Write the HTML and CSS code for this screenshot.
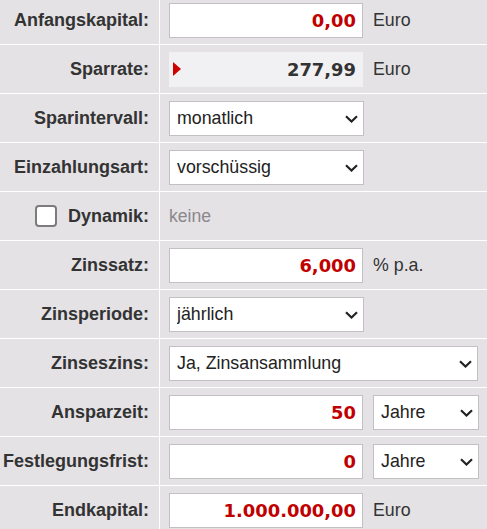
FILE: index.html
```html
<!DOCTYPE html>
<html lang="de">
<head>
<meta charset="utf-8">
<title>Sparrechner</title>
<link rel="stylesheet" href="styles.css">
</head>
<body>
<div class="form">
  <div class="row">
    <div class="label">Anfangskapital:</div>
    <div class="field"><input class="num" type="text" value="0,00"><span class="unit">Euro</span></div>
  </div>
  <div class="row">
    <div class="label">Sparrate:</div>
    <div class="field"><div class="result"><span class="tri"></span><span class="result-val">277,99</span></div><span class="unit">Euro</span></div>
  </div>
  <div class="row">
    <div class="label">Sparintervall:</div>
    <div class="field"><span class="sel-wrap sel-std"><select class="sel"><option>monatlich</option></select><svg class="chev" width="13" height="8" viewBox="0 0 13 8"><path d="M1 1.2 L6.5 6.5 L12 1.2" fill="none" stroke="#222" stroke-width="2.2"/></svg></span></div>
  </div>
  <div class="row">
    <div class="label">Einzahlungsart:</div>
    <div class="field"><span class="sel-wrap sel-std"><select class="sel"><option>vorschüssig</option></select><svg class="chev" width="13" height="8" viewBox="0 0 13 8"><path d="M1 1.2 L6.5 6.5 L12 1.2" fill="none" stroke="#222" stroke-width="2.2"/></svg></span></div>
  </div>
  <div class="row">
    <div class="label"><span class="check"></span>Dynamik:</div>
    <div class="field"><span class="muted">keine</span></div>
  </div>
  <div class="row">
    <div class="label">Zinssatz:</div>
    <div class="field"><input class="num" type="text" value="6,000"><span class="unit">% p.a.</span></div>
  </div>
  <div class="row">
    <div class="label">Zinsperiode:</div>
    <div class="field"><span class="sel-wrap sel-std"><select class="sel"><option>jährlich</option></select><svg class="chev" width="13" height="8" viewBox="0 0 13 8"><path d="M1 1.2 L6.5 6.5 L12 1.2" fill="none" stroke="#222" stroke-width="2.2"/></svg></span></div>
  </div>
  <div class="row">
    <div class="label">Zinseszins:</div>
    <div class="field"><span class="sel-wrap sel-wide"><select class="sel"><option>Ja, Zinsansammlung</option></select><svg class="chev" width="13" height="8" viewBox="0 0 13 8"><path d="M1 1.2 L6.5 6.5 L12 1.2" fill="none" stroke="#222" stroke-width="2.2"/></svg></span></div>
  </div>
  <div class="row">
    <div class="label">Ansparzeit:</div>
    <div class="field"><input class="num" type="text" value="50"><span class="sel-wrap sel-small"><select class="sel"><option>Jahre</option></select><svg class="chev" width="13" height="8" viewBox="0 0 13 8"><path d="M1 1.2 L6.5 6.5 L12 1.2" fill="none" stroke="#222" stroke-width="2.2"/></svg></span></div>
  </div>
  <div class="row">
    <div class="label">Festlegungsfrist:</div>
    <div class="field"><input class="num" type="text" value="0"><span class="sel-wrap sel-small"><select class="sel"><option>Jahre</option></select><svg class="chev" width="13" height="8" viewBox="0 0 13 8"><path d="M1 1.2 L6.5 6.5 L12 1.2" fill="none" stroke="#222" stroke-width="2.2"/></svg></span></div>
  </div>
  <div class="row">
    <div class="label">Endkapital:</div>
    <div class="field"><input class="num" type="text" value="1.000.000,00"><span class="unit">Euro</span></div>
  </div>
</div>
</body>
</html>
```

FILE: styles.css
```css
html, body {
  margin: 0;
  padding: 0;
  background: #e4e2e5;
  overflow: hidden;
}

body {
  font-family: "Liberation Sans", Arial, sans-serif;
  font-size: 17.6px;
  color: #333;
}

.form {
  margin-top: -4px;
  width: 487px;
}

.row {
  display: flex;
  height: 48px;
  border-bottom: 1px solid #fff;
}

.label {
  width: 160px;
  box-sizing: border-box;
  border-right: 1px solid #fff;
  padding-right: 10px;
  display: flex;
  align-items: center;
  justify-content: flex-end;
  font-weight: bold;
  font-size: 18px;
  color: #333;
}

.field {
  display: flex;
  align-items: center;
  padding-left: 9px;
  gap: 10px;
}

.num {
  box-sizing: border-box;
  width: 194px;
  height: 35px;
  border: 1px solid #c2c0c3;
  border-radius: 0;
  background: #fff;
  padding: 0 6px;
  margin: 0;
  text-align: right;
  font-family: "DejaVu Sans", Verdana, sans-serif;
  font-weight: bold;
  font-size: 17.9px;
  color: #c00000;
  outline: none;
}

.unit {
  color: #333;
  font-size: 17.8px;
}

.result {
  box-sizing: border-box;
  width: 194px;
  height: 35px;
  background: #f1f0f3;
  display: flex;
  align-items: center;
  justify-content: space-between;
  padding: 0 7px 0 4px;
}

.tri {
  width: 0;
  height: 0;
  border-top: 7px solid transparent;
  border-bottom: 7px solid transparent;
  border-left: 8px solid #cc0000;
}

.result-val {
  font-family: "DejaVu Sans", Verdana, sans-serif;
  font-weight: bold;
  font-size: 17.9px;
  color: #333;
}

.sel-wrap {
  position: relative;
  display: inline-block;
  height: 35px;
}

.sel-std { width: 195px; }
.sel-wide { width: 309px; }
.sel-small { width: 106px; }

.sel {
  -webkit-appearance: none;
  appearance: none;
  box-sizing: border-box;
  width: 100%;
  height: 35px;
  margin: 0;
  border: 1px solid #c2c0c3;
  border-radius: 0;
  background: #fff;
  padding: 0 24px 0 7px;
  font-family: "Liberation Sans", Arial, sans-serif;
  font-size: 17.8px;
  color: #222;
  outline: none;
}

.chev {
  position: absolute;
  right: 6px;
  top: 14px;
  pointer-events: none;
}

.check {
  box-sizing: border-box;
  width: 22px;
  height: 22px;
  border: 2px solid #7d7b7e;
  border-radius: 4px;
  background: #fff;
  margin-right: 11px;
}

.muted {
  color: #8a888b;
}
```
